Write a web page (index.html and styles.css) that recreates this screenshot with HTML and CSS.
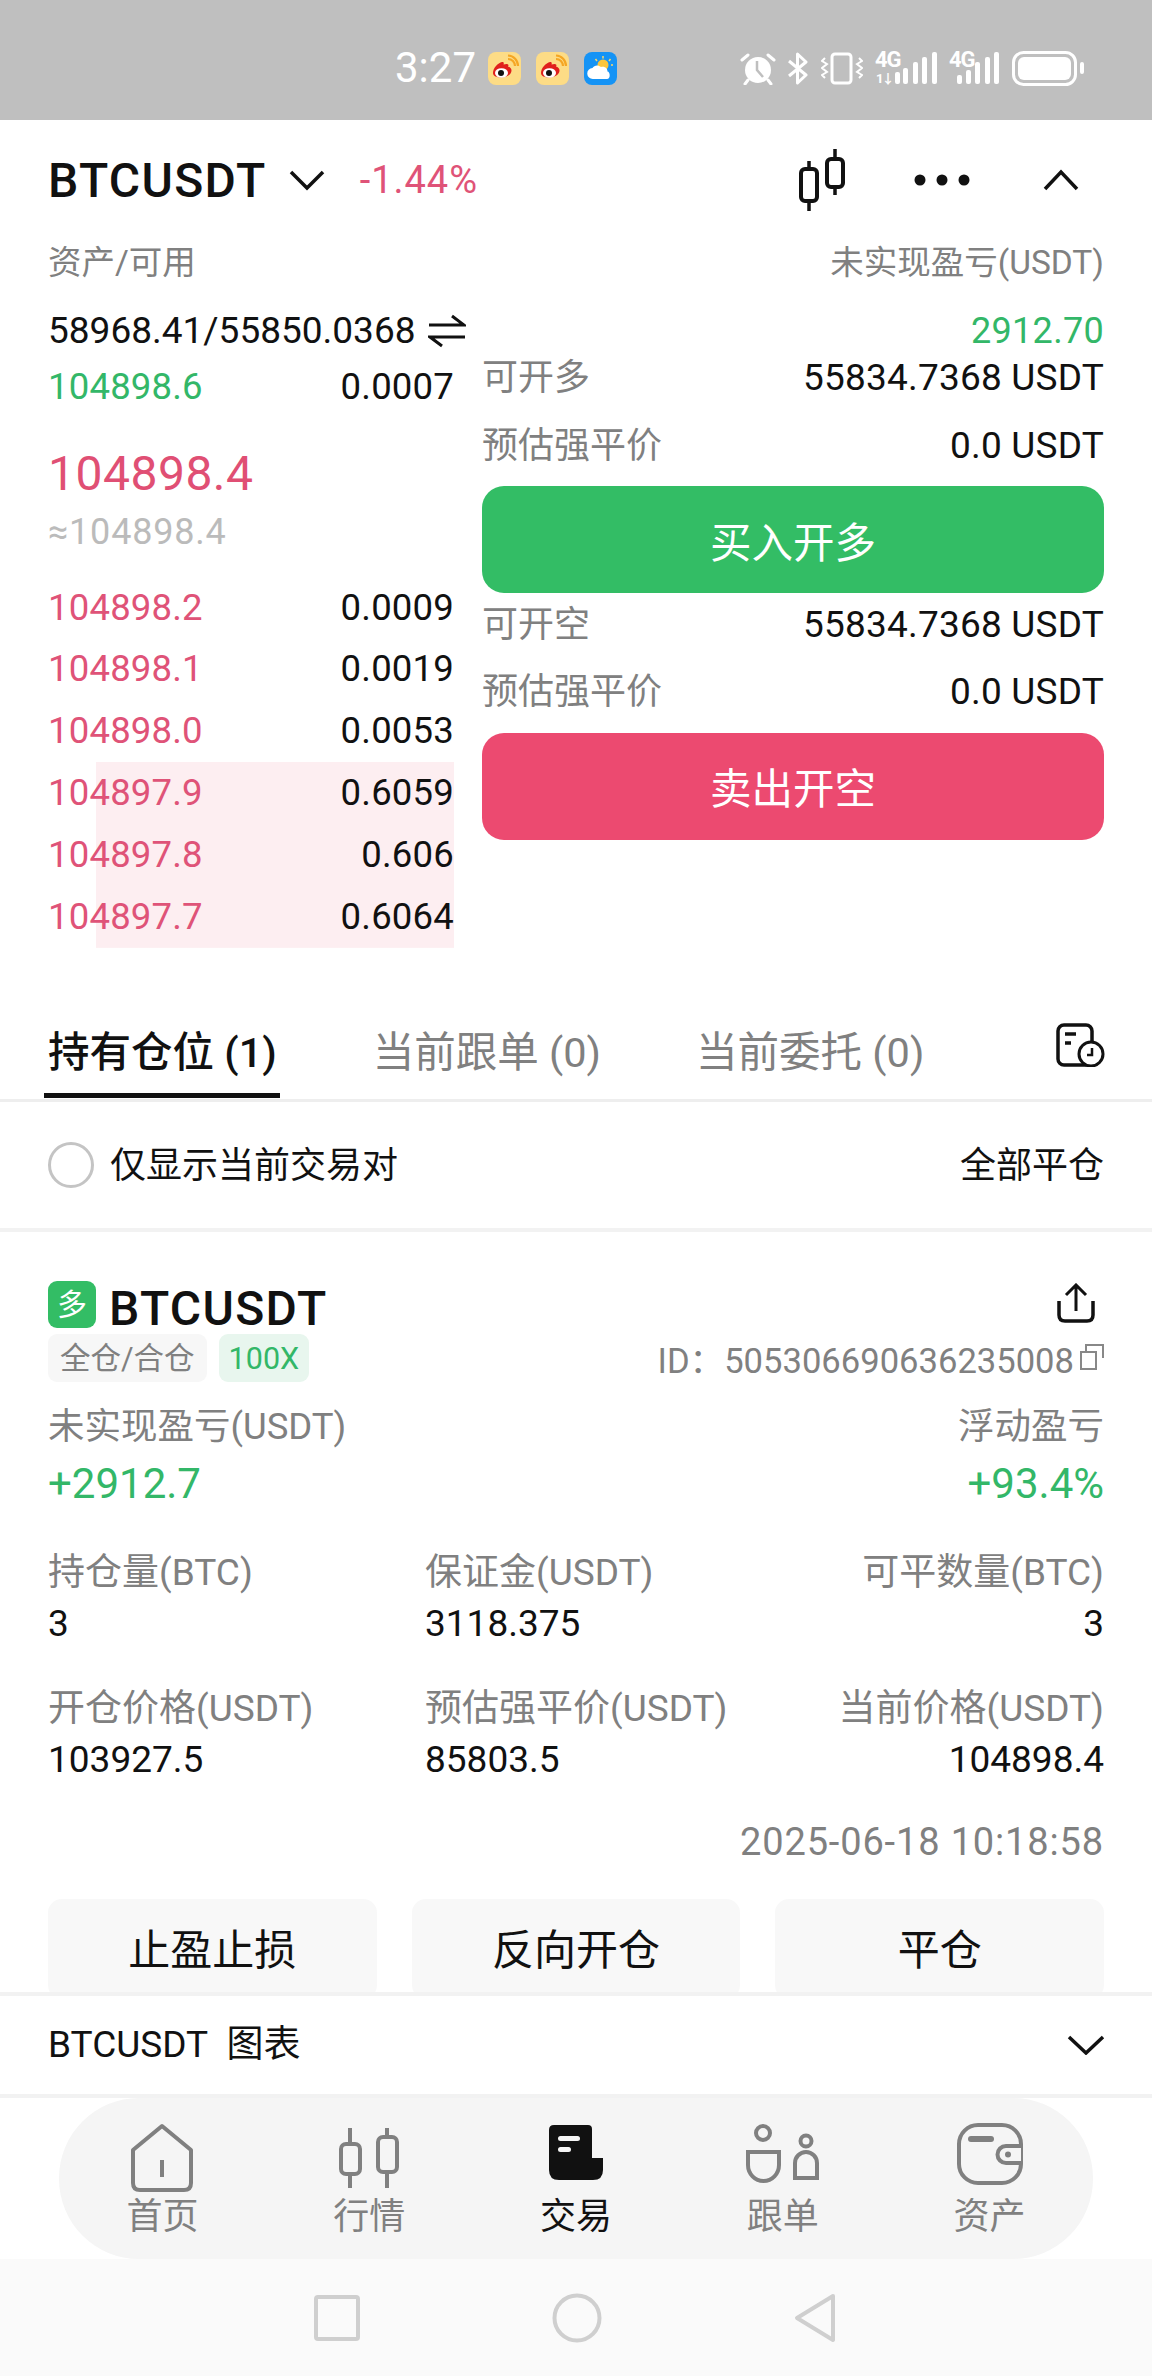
FILE: index.html
```html
<!DOCTYPE html>
<html lang="zh-CN">

<head>
    <meta charset="UTF-8">
    <meta name="viewport" content="width=device-width, initial-scale=1.0">
    <title>BTCUSDT</title>

    <link rel="stylesheet" href="styles.css">
</head>

<body>
    <div class="app">

        <div class="status-bar">
            <span class="status-time">3:27</span>
            <svg class="app-icon" width="33" height="33" viewBox="0 0 33 33">
                <rect width="33" height="33" rx="8" fill="#fddc86"/>
                <path d="M20 7a7 7 0 0 1 7 7M20 3.500A10.500 10.500 0 0 1 30 14" fill="none" stroke="#f5a623" stroke-width="2.200"/>
                <path d="M5 21c0-5 5-10 9-11 2-.5 2 1.500 1.500 2.500 4-1.500 6 0 4.500 2 2 .5 3.500 2 3.500 4 0 4-5 7-10 7s-8.500-1.500-8.500-4.500z" fill="#e0201c"/>
                <ellipse cx="13.500" cy="21" rx="6.500" ry="4.800" fill="#fff"/>
                <circle cx="13" cy="21" r="3" fill="#111"/>
            </svg>
            <svg class="app-icon" width="33" height="33" viewBox="0 0 33 33">
                <rect width="33" height="33" rx="8" fill="#fddc86"/>
                <path d="M20 7a7 7 0 0 1 7 7M20 3.500A10.500 10.500 0 0 1 30 14" fill="none" stroke="#f5a623" stroke-width="2.200"/>
                <path d="M5 21c0-5 5-10 9-11 2-.5 2 1.500 1.500 2.500 4-1.500 6 0 4.500 2 2 .5 3.500 2 3.500 4 0 4-5 7-10 7s-8.500-1.500-8.500-4.500z" fill="#e0201c"/>
                <ellipse cx="13.500" cy="21" rx="6.500" ry="4.800" fill="#fff"/>
                <circle cx="13" cy="21" r="3" fill="#111"/>
            </svg>
            <svg class="app-icon" width="33" height="33" viewBox="0 0 33 33">
                <rect width="33" height="33" rx="8" fill="#1593f5"/>
                <circle cx="19" cy="13" r="5.500" fill="#fcc63c"/>
                <path d="M19 4v2.500M11.500 7l1.500 2M26.500 7L25 9M29 13h-2" stroke="#fcd96a" stroke-width="1.500"/>
                <path d="M9 27a5.500 5.500 0 0 1-.5-11c1.500-3 6-3.500 8.500-1 4-1 6.500 1.500 6.500 4.500 2.500 0 3.500 7.500-.5 7.500z" fill="#fff"/>
            </svg>

            <div class="status-right">
                <svg class="sys-alarm" width="36" height="33" viewBox="0 0 36 33">
                    <circle cx="18" cy="18" r="13" fill="#fff"/>
                    <path d="M17 9v9l6 7" fill="none" stroke="#bfbfbf" stroke-width="2.500"/>
                    <path d="M2 8l6-5M34 8l-6-5M8 28l-3 4M28 28l3 4" stroke="#fff" stroke-width="3" stroke-linecap="round"/>
                </svg>
                <svg class="sys-bt" width="22" height="33" viewBox="0 0 22 33">
                    <path d="M2 9l17 14-8.500 8V2L19 10 2 24" fill="none" stroke="#fff" stroke-width="3" stroke-linejoin="round"/>
                </svg>
                <svg class="sys-vibrate" width="42" height="33" viewBox="0 0 42 33">
                    <rect x="11" y="2" width="19" height="29" rx="3" fill="none" stroke="#fff" stroke-width="3"/>
                    <path d="M4 6l-3 3 5 3-5 4 5 4-5 3 3 3M38 6l3 3-5 3 5 4-5 4 5 3-3 3" fill="none" stroke="#fff" stroke-width="2"/>
                </svg>
                <div class="signal signal-first">
                    <span class="signal-type">4G</span>
                    <span class="signal-mini">1↓</span>
                    <svg width="62" height="33" viewBox="0 0 62 33">
                        <rect x="20" y="20" width="5" height="12" rx="2" fill="#fff"/>
                        <rect x="28" y="16" width="5" height="16" rx="2" fill="#fff"/>
                        <rect x="38" y="10" width="5" height="22" rx="2" fill="#fff"/>
                        <rect x="47" y="5" width="5" height="27" rx="2" fill="#fff"/>
                        <rect x="57" y="0" width="5" height="32" rx="2" fill="#fff"/>
                    </svg>
                </div>
                <div class="signal signal-second">
                    <span class="signal-type">4G</span>
                    <svg width="50" height="33" viewBox="0 0 50 33">
                        <rect x="8" y="23" width="5" height="9" rx="2" fill="#fff"/>
                        <rect x="17" y="18" width="5" height="14" rx="2" fill="#fff"/>
                        <rect x="26" y="10" width="5" height="22" rx="2" fill="#fff"/>
                        <rect x="36" y="5" width="5" height="27" rx="2" fill="#fff"/>
                        <rect x="45" y="0" width="5" height="32" rx="2" fill="#fff"/>
                    </svg>
                </div>
                <svg class="sys-battery" width="72" height="35" viewBox="0 0 72 35">
                    <rect x="1.500" y="1.500" width="62" height="32" rx="10" fill="none" stroke="#fff" stroke-width="3"/>
                    <rect x="6" y="6" width="53" height="23" rx="6" fill="#fff"/>
                    <rect x="68" y="11" width="4" height="12" rx="2" fill="#fff"/>
                </svg>
            </div>
        </div>

        <header class="top-bar">
            <span class="pair-name">BTCUSDT</span>
            <svg class="pair-arrow" width="36" height="22" viewBox="0 0 36 22">
                <path d="M2 3l16 16L34 3" fill="none" stroke="#111" stroke-width="3.500"/>
            </svg>
            <span class="pair-change">-1.44%</span>
            <svg class="top-candle" width="48" height="62" viewBox="0 0 48 62">
                <path d="M11 12v50M37 0v46" stroke="#111" stroke-width="3.500"/>
                <rect x="3" y="20" width="16" height="32" rx="4" fill="#fff" stroke="#111" stroke-width="4"/>
                <rect x="29" y="10" width="16" height="28" rx="4" fill="#fff" stroke="#111" stroke-width="4"/>
            </svg>
            <svg class="top-dots" width="56" height="12" viewBox="0 0 56 12">
                <circle cx="6" cy="6" r="5.500" fill="#111"/>
                <circle cx="28" cy="6" r="5.500" fill="#111"/>
                <circle cx="50" cy="6" r="5.500" fill="#111"/>
            </svg>
            <svg class="top-up" width="36" height="22" viewBox="0 0 36 22">
                <path d="M2 20L18 3l16 17" fill="none" stroke="#111" stroke-width="3.500"/>
            </svg>
        </header>

        <section class="trade">
            <div class="book">
                <div class="muted-label">资产/可用</div>
                <div class="asset-value">
                    <span>58968.41/55850.0368</span>
                    <svg width="38" height="34" viewBox="0 0 38 34">
                        <path d="M1 11h35L24 2M37 23H2l12 9" fill="none" stroke="#111" stroke-width="3"/>
                    </svg>
                </div>
                <div class="book-row best-bid"><span class="green">104898.6</span><span>0.0007</span></div>
                <div class="last-price">104898.4</div>
                <div class="index-price">≈104898.4</div>
                <div class="book-list">
                    <div class="book-row"><span class="red">104898.2</span><span>0.0009</span></div>
                    <div class="book-row"><span class="red">104898.1</span><span>0.0019</span></div>
                    <div class="book-row"><span class="red">104898.0</span><span>0.0053</span></div>
                    <div class="book-deep">
                        <div class="book-row"><span class="red">104897.9</span><span>0.6059</span></div>
                        <div class="book-row"><span class="red">104897.8</span><span>0.606</span></div>
                        <div class="book-row"><span class="red">104897.7</span><span>0.6064</span></div>
                    </div>
                </div>
            </div>

            <div class="order">
                <div class="muted-label align-right">未实现盈亏(USDT)</div>
                <div class="asset-pnl green">2912.70</div>
                <div class="open-row first-row"><span class="muted">可开多</span><span class="open-num">55834.7368 USDT</span></div>
                <div class="open-row"><span class="muted">预估强平价</span><span class="open-num">0.0 USDT</span></div>
                <button class="open-btn btn-buy">买入开多</button>
                <div class="open-row after-btn"><span class="muted">可开空</span><span class="open-num">55834.7368 USDT</span></div>
                <div class="open-row"><span class="muted">预估强平价</span><span class="open-num">0.0 USDT</span></div>
                <button class="open-btn btn-sell">卖出开空</button>
            </div>
        </section>

        <nav class="tabs">
            <span class="tab tab-active">持有仓位 (1)</span>
            <span class="tab tab-second">当前跟单 (0)</span>
            <span class="tab tab-third">当前委托 (0)</span>
            <svg class="tab-history" width="50" height="44" viewBox="0 0 50 44">
                <rect x="2" y="2" width="34" height="40" rx="6" fill="none" stroke="#111" stroke-width="3.500"/>
                <path d="M9 11h11M9 20h6" stroke="#111" stroke-width="3.500"/>
                <circle cx="35" cy="31" r="12" fill="#fff" stroke="#111" stroke-width="3"/>
                <path d="M36 25v7h-5" fill="none" stroke="#111" stroke-width="2.500"/>
            </svg>
        </nav>

        <div class="filter">
            <span class="filter-radio"></span>
            <span class="filter-text">仅显示当前交易对</span>
            <span class="filter-close">全部平仓</span>
        </div>

        <section class="position">
            <div class="pos-title">
                <span class="side-badge">多</span>
                <span class="pos-name">BTCUSDT</span>
                <svg class="pos-share" width="38" height="40" viewBox="0 0 38 40">
                    <path d="M19 28V3M9 12l10-10 10 10" fill="none" stroke="#111" stroke-width="3"/>
                    <path d="M2 18v14q0 6 6 6h22q6 0 6-6V18" fill="none" stroke="#111" stroke-width="3.500"/>
                </svg>
            </div>

            <div class="pos-tags">
                <span class="tag tag-grey">全仓/合仓</span>
                <span class="tag tag-green">100X</span>
                <span class="pos-id">ID：505306690636235008</span>
                <svg class="pos-copy" width="24" height="26" viewBox="0 0 24 26">
                    <path d="M1 8h15v17H1zM6 8V1h17v13" fill="none" stroke="#888" stroke-width="2"/>
                </svg>
            </div>

            <div class="pos-pnl">
                <div>
                    <div class="pnl-label">未实现盈亏(USDT)</div>
                    <div class="pnl-value green">+2912.7</div>
                </div>
                <div class="align-right">
                    <div class="pnl-label">浮动盈亏</div>
                    <div class="pnl-value green">+93.4%</div>
                </div>
            </div>

            <div class="pos-grid">
                <div>
                    <div class="grid-label">持仓量(BTC)</div>
                    <div class="grid-value">3</div>
                </div>
                <div>
                    <div class="grid-label">保证金(USDT)</div>
                    <div class="grid-value">3118.375</div>
                </div>
                <div class="align-right">
                    <div class="grid-label">可平数量(BTC)</div>
                    <div class="grid-value">3</div>
                </div>
                <div>
                    <div class="grid-label">开仓价格(USDT)</div>
                    <div class="grid-value">103927.5</div>
                </div>
                <div>
                    <div class="grid-label">预估强平价(USDT)</div>
                    <div class="grid-value">85803.5</div>
                </div>
                <div class="align-right">
                    <div class="grid-label">当前价格(USDT)</div>
                    <div class="grid-value">104898.4</div>
                </div>
            </div>

            <div class="pos-date">2025-06-18 10:18:58</div>

            <div class="pos-actions">
                <button class="action-btn">止盈止损</button>
                <button class="action-btn">反向开仓</button>
                <button class="action-btn">平仓</button>
            </div>
        </section>

        <div class="chart-bar">
            <span class="chart-title">BTCUSDT&nbsp;&nbsp;图表</span>
            <svg width="38" height="20" viewBox="0 0 38 20">
                <path d="M2 2l17 16L36 2" fill="none" stroke="#111" stroke-width="3.500"/>
            </svg>
        </div>

        <div class="bottom-wrap">
            <nav class="bottom-nav">
                <div class="nav-item">
                    <svg width="66" height="70" viewBox="0 0 66 70">
                        <path d="M4 27L33 3l29 24v33q0 7-7 7H11q-7 0-7-7z" fill="none" stroke="#808080" stroke-width="4" stroke-linejoin="round"/>
                        <path d="M33 37v17" stroke="#808080" stroke-width="4"/>
                    </svg>
                    <span>首页</span>
                </div>
                <div class="nav-item">
                    <svg width="62" height="70" viewBox="0 0 62 70">
                        <path d="M12 5v60M49 5v60" stroke="#808080" stroke-width="4"/>
                        <rect x="3" y="21" width="19" height="30" rx="5" fill="#f5f5f5" stroke="#808080" stroke-width="4"/>
                        <rect x="40" y="14" width="19" height="35" rx="5" fill="#f5f5f5" stroke="#808080" stroke-width="4"/>
                    </svg>
                    <span>行情</span>
                </div>
                <div class="nav-item nav-active">
                    <svg width="54" height="70" viewBox="0 0 54 70">
                        <path d="M5 2h34q4 0 4 4v29h11v12q0 10-10 10H10Q0 57 0 47V7q0-5 5-5z" fill="#111"/>
                        <rect x="9" y="13" width="22" height="5" rx="2.500" fill="#f5f5f5"/>
                        <rect x="9" y="24" width="13" height="5" rx="2.500" fill="#f5f5f5"/>
                    </svg>
                    <span>交易</span>
                </div>
                <div class="nav-item">
                    <svg width="76" height="70" viewBox="0 0 76 70">
                        <circle cx="18" cy="10" r="7" fill="none" stroke="#808080" stroke-width="4"/>
                        <path d="M3 29h31v13a15.500 16 0 0 1-31 0z" fill="none" stroke="#808080" stroke-width="4"/>
                        <circle cx="61" cy="18" r="5.500" fill="none" stroke="#808080" stroke-width="4"/>
                        <path d="M50 55V40a11 11 0 0 1 22 0v15z" fill="none" stroke="#808080" stroke-width="4"/>
                    </svg>
                    <span>跟单</span>
                </div>
                <div class="nav-item">
                    <svg width="68" height="70" viewBox="0 0 68 70">
                        <rect x="3" y="2" width="62" height="58" rx="19" fill="none" stroke="#808080" stroke-width="4"/>
                        <path d="M15 16h20" stroke="#808080" stroke-width="6" stroke-linecap="round"/>
                        <path d="M65 23H50a8 8 0 0 0 0 17h15" fill="#f5f5f5" stroke="#808080" stroke-width="4"/>
                        <circle cx="52" cy="31.500" r="3" fill="#808080"/>
                    </svg>
                    <span>资产</span>
                </div>
            </nav>
        </div>

        <div class="system-nav">
            <svg width="46" height="46" viewBox="0 0 46 46">
                <rect x="2" y="2" width="42" height="42" rx="2" fill="none" stroke="#cfcfcf" stroke-width="4"/>
            </svg>
            <svg width="50" height="50" viewBox="0 0 50 50">
                <circle cx="25" cy="25" r="22.500" fill="none" stroke="#cfcfcf" stroke-width="4"/>
            </svg>
            <svg width="42" height="50" viewBox="0 0 42 50">
                <path d="M39 3L3 25l36 22z" fill="none" stroke="#cfcfcf" stroke-width="4" stroke-linejoin="round"/>
            </svg>
        </div>

    </div>
</body>

</html>
```

FILE: styles.css
```css
body {
    font-family: Roboto, "Noto Sans CJK SC", sans-serif;
    margin: 0;
    padding: 0;
    color: #111;
    background: #fff;
}

.app {
    width: 1152px;
    height: 2376px;
    display: flex;
    flex-direction: column;
    overflow: hidden;
}

.green {
    color: #33b768;
}

.red {
    color: #df5378;
}

.muted {
    color: #808080;
}

.align-right {
    text-align: right;
}

/* status bar */
.status-bar {
    flex: none;
    height: 120px;
    background: #bfbfbf;
    display: flex;
    align-items: center;
    padding: 16px 68px 0 395px;
    box-sizing: border-box;
    color: #fff;
}

.status-time {
    font-size: 42px;
    line-height: 40px;
    width: 93px;
}

.app-icon {
    margin-right: 15px;
}

.status-right {
    margin-left: auto;
    display: flex;
    align-items: center;
}

.sys-alarm {
    margin-right: 11px;
}

.sys-bt {
    margin-right: 12px;
}

.sys-vibrate {
    margin-right: 12px;
}

.signal {
    display: flex;
    align-items: flex-end;
    position: relative;
}

.signal-first {
    margin-right: 12px;
}

.signal-second {
    margin-right: 13px;
}

.signal-type {
    position: absolute;
    left: 0;
    top: -2px;
    font-size: 22px;
    line-height: 20px;
    font-weight: 700;
    letter-spacing: -1px;
}

.signal-mini {
    position: absolute;
    left: 1px;
    bottom: 0;
    font-size: 13px;
    line-height: 13px;
    font-weight: 700;
    letter-spacing: -2px;
}

/* top bar */
.top-bar {
    flex: none;
    height: 120px;
    display: flex;
    align-items: center;
    padding: 0 73px 0 48px;
    box-sizing: border-box;
}

.pair-name {
    font-size: 48px;
    font-weight: 500;
    letter-spacing: 1.300px;
}

.pair-arrow {
    margin-left: 22px;
}

.pair-change {
    margin-left: 35px;
    font-size: 38px;
    letter-spacing: 1px;
    color: #df5378;
}

.top-candle {
    margin-left: auto;
    margin-right: -1px;
}

.top-dots {
    margin-left: 69px;
}

.top-up {
    margin-left: 73px;
}

/* book and order */
.trade {
    flex: none;
    height: 750px;
    display: flex;
    gap: 28px;
    padding: 0 48px;
    box-sizing: border-box;
}

.book {
    width: 406px;
}

.order {
    flex: 1;
}

.muted-label {
    color: #808080;
    font-size: 33.500px;
    line-height: 46px;
}

.asset-value {
    display: flex;
    align-items: center;
    margin-top: 22px;
    font-size: 37px;
    line-height: 46px;
    white-space: nowrap;
}

.asset-value svg {
    flex: none;
    margin-left: 12px;
}

.asset-pnl {
    margin-top: 22px;
    font-size: 36px;
    letter-spacing: .300px;
    line-height: 46px;
    text-align: right;
}

.book-row {
    display: flex;
    justify-content: space-between;
    height: 61.600px;
    line-height: 61.600px;
    font-size: 36.500px;
    letter-spacing: .200px;
}

.best-bid {
    margin-top: 2px;
}

.last-price {
    margin-top: 29px;
    font-size: 48px;
    letter-spacing: .500px;
    line-height: 54px;
    color: #e04f74;
}

.index-price {
    margin-top: 6px;
    font-size: 36px;
    letter-spacing: .800px;
    line-height: 50px;
    color: #bbb;
}

.book-list {
    margin-top: 20px;
}

.book-deep {
    margin-top: 1px;
    padding-bottom: 1px;
    background: linear-gradient(#fdeef1, #fdeef1) right / 358px 100% no-repeat;
}

.open-row {
    display: flex;
    justify-content: space-between;
    font-size: 36px;
    line-height: 46px;
    margin-top: 21.500px;
}

.open-num {
    font-size: 37px;
    letter-spacing: .200px;
}

.open-row.first-row {
    margin-top: 1px;
}

.open-row.after-btn {
    margin-top: 8.500px;
}

.open-btn {
    display: block;
    width: 100%;
    height: 107px;
    margin-top: 17.500px;
    border: none;
    border-radius: 22px;
    color: #fff;
    font-family: inherit;
    font-size: 41.500px;
}

.btn-buy {
    background: #33bd65;
}

.btn-sell {
    background: #ec4a70;
}

/* tabs */
.tabs {
    flex: none;
    height: 112px;
    display: flex;
    align-items: flex-start;
    padding: 0 46px 0 44px;
    box-sizing: border-box;
    border-bottom: 3px solid #eee;
}

.tab {
    font-size: 41.500px;
    line-height: 60px;
    color: #808080;
    padding-top: 33px;
    height: 108px;
    box-sizing: border-box;
    white-space: nowrap;
}

.tab-active {
    color: #111;
    font-weight: 500;
    padding-left: 4px;
    padding-right: 3px;
    border-bottom: 5px solid #111;
}

.tab-second {
    margin-left: 93px;
}

.tab-third {
    margin-left: 95px;
}

.tab-history {
    margin-left: auto;
    margin-top: 33px;
}

/* filter row */
.filter {
    flex: none;
    height: 130px;
    display: flex;
    align-items: center;
    padding: 0 48px;
    box-sizing: border-box;
    border-bottom: 4px solid #f2f2f2;
    font-size: 36px;
}

.filter-radio {
    width: 46px;
    height: 46px;
    box-sizing: border-box;
    border: 3px solid #c4c4c4;
    border-radius: 50%;
}

.filter-text {
    margin-left: 16px;
    padding-bottom: 6px;
}

.filter-close {
    margin-left: auto;
    padding-bottom: 6px;
}

/* position card */
.position {
    flex: none;
    height: 760px;
    padding: 49px 48px 0;
    box-sizing: border-box;
    overflow: hidden;
}

.pos-title {
    display: flex;
    align-items: center;
    height: 47px;
}

.side-badge {
    width: 48px;
    height: 47px;
    border-radius: 9px;
    background: #33bd65;
    color: #fff;
    font-size: 30px;
    line-height: 47px;
    text-align: center;
}

.pos-name {
    margin-left: 13px;
    padding-top: 8px;
    font-size: 48px;
    font-weight: 500;
    letter-spacing: 1.300px;
}

.pos-share {
    margin-left: auto;
    margin-right: 9px;
    margin-top: -4px;
}

.pos-tags {
    display: flex;
    align-items: center;
    height: 48px;
    margin-top: 6px;
}

.tag {
    height: 48px;
    border-radius: 9px;
    font-size: 30.500px;
    line-height: 50px;
    padding: 0 12px;
}

.tag-grey {
    background: #f7f7f7;
    color: #808080;
}

.tag-green {
    background: #e8f6ee;
    color: #33b768;
    margin-left: 12px;
    padding: 0 10px;
}

.pos-id {
    margin-left: auto;
    font-size: 34.600px;
    color: #808080;
}

.pos-copy {
    margin-left: 6px;
    margin-top: -2px;
}

.pos-pnl {
    display: flex;
    justify-content: space-between;
    margin-top: 23px;
}

.pnl-label {
    font-size: 36.500px;
    line-height: 44px;
    color: #808080;
}

.pnl-value {
    margin-top: 10px;
    font-size: 42px;
    line-height: 50px;
}

.pos-grid {
    display: grid;
    grid-template-columns: 377px 1fr 1fr;
    row-gap: 40px;
    margin-top: 41px;
}

.grid-label {
    font-size: 37px;
    line-height: 46px;
    color: #808080;
    white-space: nowrap;
}

.grid-value {
    margin-top: 6px;
    font-size: 37px;
    line-height: 44px;
}

.pos-date {
    margin-top: 38px;
    font-size: 38px;
    letter-spacing: .850px;
    line-height: 44px;
    color: #808080;
    text-align: right;
}

.pos-actions {
    display: grid;
    grid-template-columns: 1fr 1fr 1fr;
    gap: 35px;
    margin-top: 35px;
}

.action-btn {
    height: 100px;
    padding-bottom: 6px;
    border: none;
    border-radius: 14px;
    background: #f8f8f8;
    color: #111;
    font-family: inherit;
    font-size: 42px;
}

/* chart bar */
.chart-bar {
    flex: none;
    height: 106px;
    display: flex;
    align-items: center;
    justify-content: space-between;
    padding: 0 47px 0 48px;
    box-sizing: border-box;
    border-top: 4px solid #f2f2f2;
    border-bottom: 4px solid #f2f2f2;
    font-size: 37px;
}

.chart-title {
    padding-bottom: 9px;
}

/* bottom nav */
.bottom-wrap {
    flex: none;
    height: 161px;
    padding: 0 59px;
    box-sizing: border-box;
}

.bottom-nav {
    height: 100%;
    display: grid;
    grid-template-columns: repeat(5, 1fr);
    background: #f5f5f5;
    border-radius: 80px;
}

.nav-item {
    display: flex;
    flex-direction: column;
    align-items: center;
    padding-top: 25px;
    font-size: 36px;
    line-height: 44px;
    color: #808080;
}

.nav-item svg {
    display: block;
    margin-bottom: 2px;
}

.nav-active {
    color: #111;
}

.system-nav {
    flex: 1;
    background: #fafafa;
    display: flex;
    align-items: center;
    padding: 0 316px 0 314px;
    justify-content: space-between;
    box-sizing: border-box;
}
```
